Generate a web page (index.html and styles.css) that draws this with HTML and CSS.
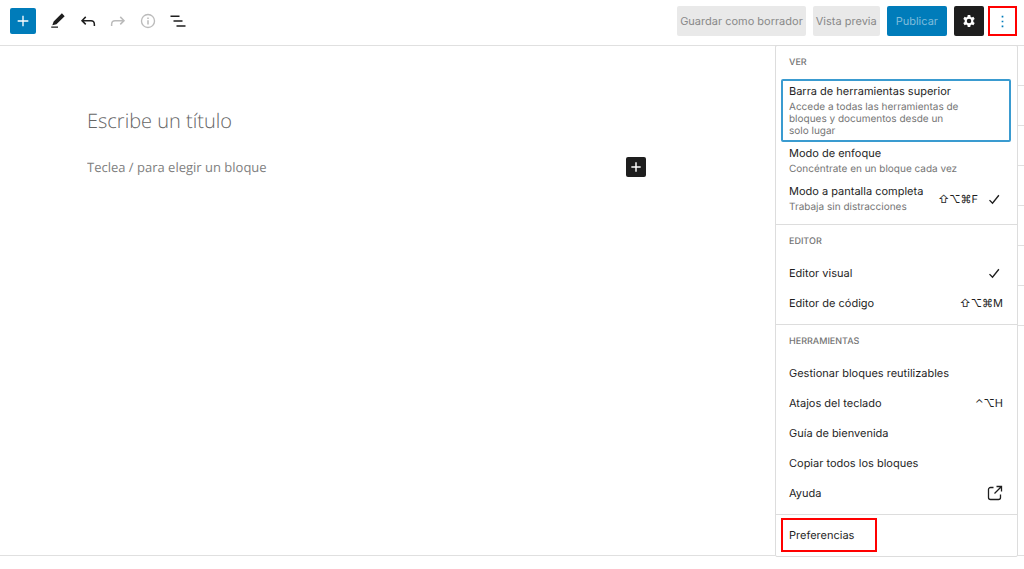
FILE: index.html
```html
<!DOCTYPE html>
<html lang="es">
<head>
    <meta charset="UTF-8">
    <meta name="viewport" content="width=device-width, initial-scale=1.0">
    <title>Editor de entradas</title>
    <link rel="stylesheet" href="styles.css">
</head>
<body>
    <header class="toolbar">
        <div class="tools">
            <button type="button" class="add-block" aria-label="Añadir bloque">
                <svg viewBox="0 0 24 24"><path d="M12 4v16M4 12h16" fill="none" stroke="currentColor" stroke-width="2"/></svg>
            </button>
            <button type="button" class="tool" aria-label="Herramientas">
                <svg viewBox="0 0 24 24"><path d="M20.900 5.500L17.200 1.500 6.200 12.500l-1.800 5.200 5.500-1.500L20.900 5.500zM3 21h9v-1.800H3V21z"/></svg>
            </button>
            <button type="button" class="tool" aria-label="Deshacer">
                <svg viewBox="0 0 24 24"><path d="M20.500 18.500v-2c0-3.200-1.800-5-4.500-5H4.500M9 6.500l-5 5 5 5" fill="none" stroke="currentColor" stroke-width="2"/></svg>
            </button>
            <button type="button" class="tool" aria-label="Rehacer" disabled>
                <svg viewBox="0 0 24 24"><path d="M3.500 18.500v-2c0-3.200 1.800-5 4.500-5h11.500M15 6.500l5 5-5 5" fill="none" stroke="currentColor" stroke-width="2"/></svg>
            </button>
            <button type="button" class="tool" aria-label="Detalles" disabled>
                <svg viewBox="0 0 24 24"><circle cx="12" cy="12" r="8.700" fill="none" stroke="currentColor" stroke-width="1.800"/><path d="M11 11h2v5.500h-2zM11 7.200h2v2h-2z"/></svg>
            </button>
            <button type="button" class="tool" aria-label="Vista de lista">
                <svg viewBox="0 0 24 24"><path d="M2 4.500h12v2H2zM6 11h12v2H6zM10 17.500h12v2H10z"/></svg>
            </button>
        </div>
        <div class="actions">
            <button type="button" class="btn" disabled>Guardar como borrador</button>
            <button type="button" class="btn" disabled>Vista previa</button>
            <button type="button" class="btn btn-primary" disabled>Publicar</button>
            <div class="toggles">
                <button type="button" class="btn-settings" aria-label="Ajustes">
                    <svg viewBox="0 0 24 24"><path fill-rule="evenodd" d="M10.300 4h3.400l.4 2.300 1.600.9 2.200-.8 1.700 2.900-1.800 1.500v2.400l1.800 1.500-1.700 2.900-2.200-.8-1.600.9-.4 2.300h-3.400l-.4-2.300-1.600-.9-2.200.8-1.700-2.900 1.800-1.500v-2.400L4.400 9.300l1.700-2.900 2.200.8 1.600-.9zM12 9a3 3 0 1 0 0 6 3 3 0 0 0 0-6z"/></svg>
                </button>
                <button type="button" class="btn-more" aria-label="Opciones" aria-expanded="true">
                    <svg viewBox="0 0 24 24"><path d="M10.800 4h2.400v2.400h-2.400zM10.800 10.800h2.400v2.400h-2.400zM10.800 17.600h2.400V20h-2.400z"/></svg>
                </button>
            </div>
        </div>

        <div class="menu" role="menu">
            <section class="menu-group">
                <h2>Ver</h2>
                <button type="button" role="menuitem" class="item focused">
                    <span class="text">Barra de herramientas superior
                        <small>Accede a todas las herramientas de bloques y documentos desde un solo lugar</small>
                    </span>
                </button>
                <button type="button" role="menuitem" class="item">
                    <span class="text">Modo de enfoque
                        <small>Concéntrate en un bloque cada vez</small>
                    </span>
                </button>
                <button type="button" role="menuitem" class="item">
                    <span class="text">Modo a pantalla completa
                        <small>Trabaja sin distracciones</small>
                    </span>
                    <kbd>⇧⌥⌘F</kbd>
                    <svg class="check" viewBox="0 0 24 24"><path d="M6 13.500l4 4L18.500 7"/></svg>
                </button>
            </section>
            <section class="menu-group">
                <h2>Editor</h2>
                <button type="button" role="menuitem" class="item">
                    <span class="text">Editor visual</span>
                    <svg class="check" viewBox="0 0 24 24"><path d="M6 13.500l4 4L18.500 7"/></svg>
                </button>
                <button type="button" role="menuitem" class="item">
                    <span class="text">Editor de código</span>
                    <kbd>⇧⌥⌘M</kbd>
                </button>
            </section>
            <section class="menu-group">
                <h2>Herramientas</h2>
                <a href="#" role="menuitem" class="item"><span class="text">Gestionar bloques reutilizables</span></a>
                <button type="button" role="menuitem" class="item">
                    <span class="text">Atajos del teclado</span>
                    <kbd>⌃⌥H</kbd>
                </button>
                <button type="button" role="menuitem" class="item"><span class="text">Guía de bienvenida</span></button>
                <button type="button" role="menuitem" class="item"><span class="text">Copiar todos los bloques</span></button>
                <a href="#" role="menuitem" class="item">
                    <span class="text">Ayuda</span>
                    <svg class="external" viewBox="0 0 16 16"><path d="M6.500 2.500H3.500a2 2 0 0 0-2 2v8a2 2 0 0 0 2 2h8a2 2 0 0 0 2-2V9.500M9.500 1.500h5v5M14.500 1.500L7.500 8.500"/></svg>
                </a>
            </section>
            <section class="menu-group menu-footer">
                <button type="button" role="menuitem" class="item marked"><span class="text">Preferencias</span></button>
            </section>
        </div>
    </header>

    <div class="workspace">
        <main class="canvas">
            <input type="text" class="post-title" aria-label="Título" placeholder="Escribe un título">
            <div class="paragraph">
                <input type="text" class="post-text" aria-label="Bloque" placeholder="Teclea / para elegir un bloque">
                <button type="button" class="inserter" aria-label="Añadir bloque">
                    <svg viewBox="0 0 24 24"><path d="M12 4v16M4 12h16" fill="none" stroke="currentColor" stroke-width="2.500"/></svg>
                </button>
            </div>
        </main>
        <aside class="sidebar">
            <div class="panel"></div>
            <div class="panel"></div>
            <div class="panel"></div>
            <div class="panel"></div>
            <div class="panel"></div>
            <div class="panel"></div>
            <div class="panel"></div>
        </aside>
    </div>
    <footer class="breadcrumb"></footer>
</body>
</html>
```
FILE: styles.css
```css
*, *::after {
    box-sizing: border-box;
}
body {
    margin: 0;
    height: 100vh;
    display: flex;
    flex-direction: column;
    font-family: Inter, "Liberation Sans", sans-serif;
    font-size: 11px;
    text-rendering: geometricPrecision;
    color: #1e1e1e;
    background: #fff;
}
button, input {
    font: inherit;
    color: inherit;
    border: none;
    padding: 0;
    background: none;
    text-rendering: inherit;
}
button {
    cursor: pointer;
}
svg {
    display: block;
    fill: currentColor;
}

/* top bar */
.toolbar {
    position: relative;
    display: flex;
    justify-content: space-between;
    align-items: center;
    padding: 6px 7px 9px 10px;
    border-bottom: 1px solid #e0e0e0;
}
.tools, .actions, .toggles {
    display: flex;
    align-items: center;
}
.tools {
    gap: 12px;
}
.actions {
    gap: 7px;
}
.toggles {
    gap: 4px;
}
.add-block {
    width: 26px;
    height: 26px;
    padding: 5px;
    margin-right: 1px;
    border-radius: 2px;
    color: #fff;
    background: #007cba;
}
.tool {
    width: 18px;
    height: 18px;
}
.tool:disabled {
    color: #bbb;
}
.btn {
    height: 30px;
    padding: 0 3px;
    border-radius: 2px;
    color: #888;
    background: #e9e9e9;
}
.btn-primary {
    padding: 0 9px;
    color: #7fbddc;
    background: #007cba;
}
.btn-settings {
    width: 30px;
    height: 30px;
    padding: 6px;
    border-radius: 2px;
    color: #fff;
    background: #1e1e1e;
}
.btn-more {
    width: 29px;
    height: 30px;
    padding: 4px;
    border: 2px solid #f00;
    color: #007cba;
}

/* options menu */
.menu {
    position: absolute;
    top: 100%;
    right: 6px;
    z-index: 1;
    width: 243px;
    border: 1px solid #ddd;
    border-radius: 2px;
    background: #fff;
}
.menu-group {
    padding: 7px 6px 6px 5px;
}
.menu-group + .menu-group {
    border-top: 1px solid #ddd;
}
.menu .menu-footer {
    padding-top: 5px;
}
.menu h2 {
    margin: 0 8px 7px;
    font-size: 9px;
    line-height: 19px;
    font-weight: 500;
    text-transform: uppercase;
    color: #757575;
}
.item {
    position: relative;
    display: flex;
    align-items: center;
    width: 100%;
    min-height: 30px;
    padding: 4px 8px 5px;
    line-height: 14px;
    text-align: left;
    text-decoration: none;
    color: inherit;
}
.item .text {
    flex: 1;
}
.item small {
    display: block;
    max-width: 172px;
    margin-top: 3px;
    font-size: 10px;
    line-height: 12px;
    color: #757575;
}
.item kbd {
    font-family: inherit;
}
.focused {
    padding: 3px 6px;
    border: 2px solid #3a9bd0;
    border-radius: 2px;
}
.check {
    width: 18px;
    height: 18px;
    margin-left: 7px;
    fill: none;
    stroke: currentColor;
    stroke-width: 1.8;
}
.external {
    width: 16px;
    height: 16px;
    fill: none;
    stroke: currentColor;
    stroke-width: 1.3;
}
.marked::after {
    content: "";
    position: absolute;
    top: -2px;
    bottom: -2px;
    left: 0;
    width: 96px;
    border: 2px solid #f00;
}

/* editor */
.workspace {
    flex: 1;
    display: flex;
}
.canvas {
    flex: 1;
    padding: 58px 24px 0 87px;
}
.canvas input {
    display: block;
    width: 100%;
    outline: none;
    font-family: "Open Sans", sans-serif;
}
.canvas input::placeholder {
    color: #808080;
    opacity: 1;
}
.canvas .post-title {
    height: 32px;
    font-size: 20px;
    font-weight: 300;
}
.canvas .post-title::placeholder {
    color: #666;
}
.paragraph {
    display: flex;
    align-items: center;
    max-width: 559px;
    margin-top: 21px;
}
.canvas .post-text {
    flex: 1;
    font-size: 13px;
}
.inserter {
    width: 20px;
    height: 20px;
    padding: 3px;
    border-radius: 2px;
    color: #fff;
    background: #1e1e1e;
}
.sidebar {
    width: 240px;
}
.panel {
    height: 40px;
    border-bottom: 1px solid #e0e0e0;
}
.breadcrumb {
    height: 14px;
    border-top: 1px solid #e0e0e0;
}
```
